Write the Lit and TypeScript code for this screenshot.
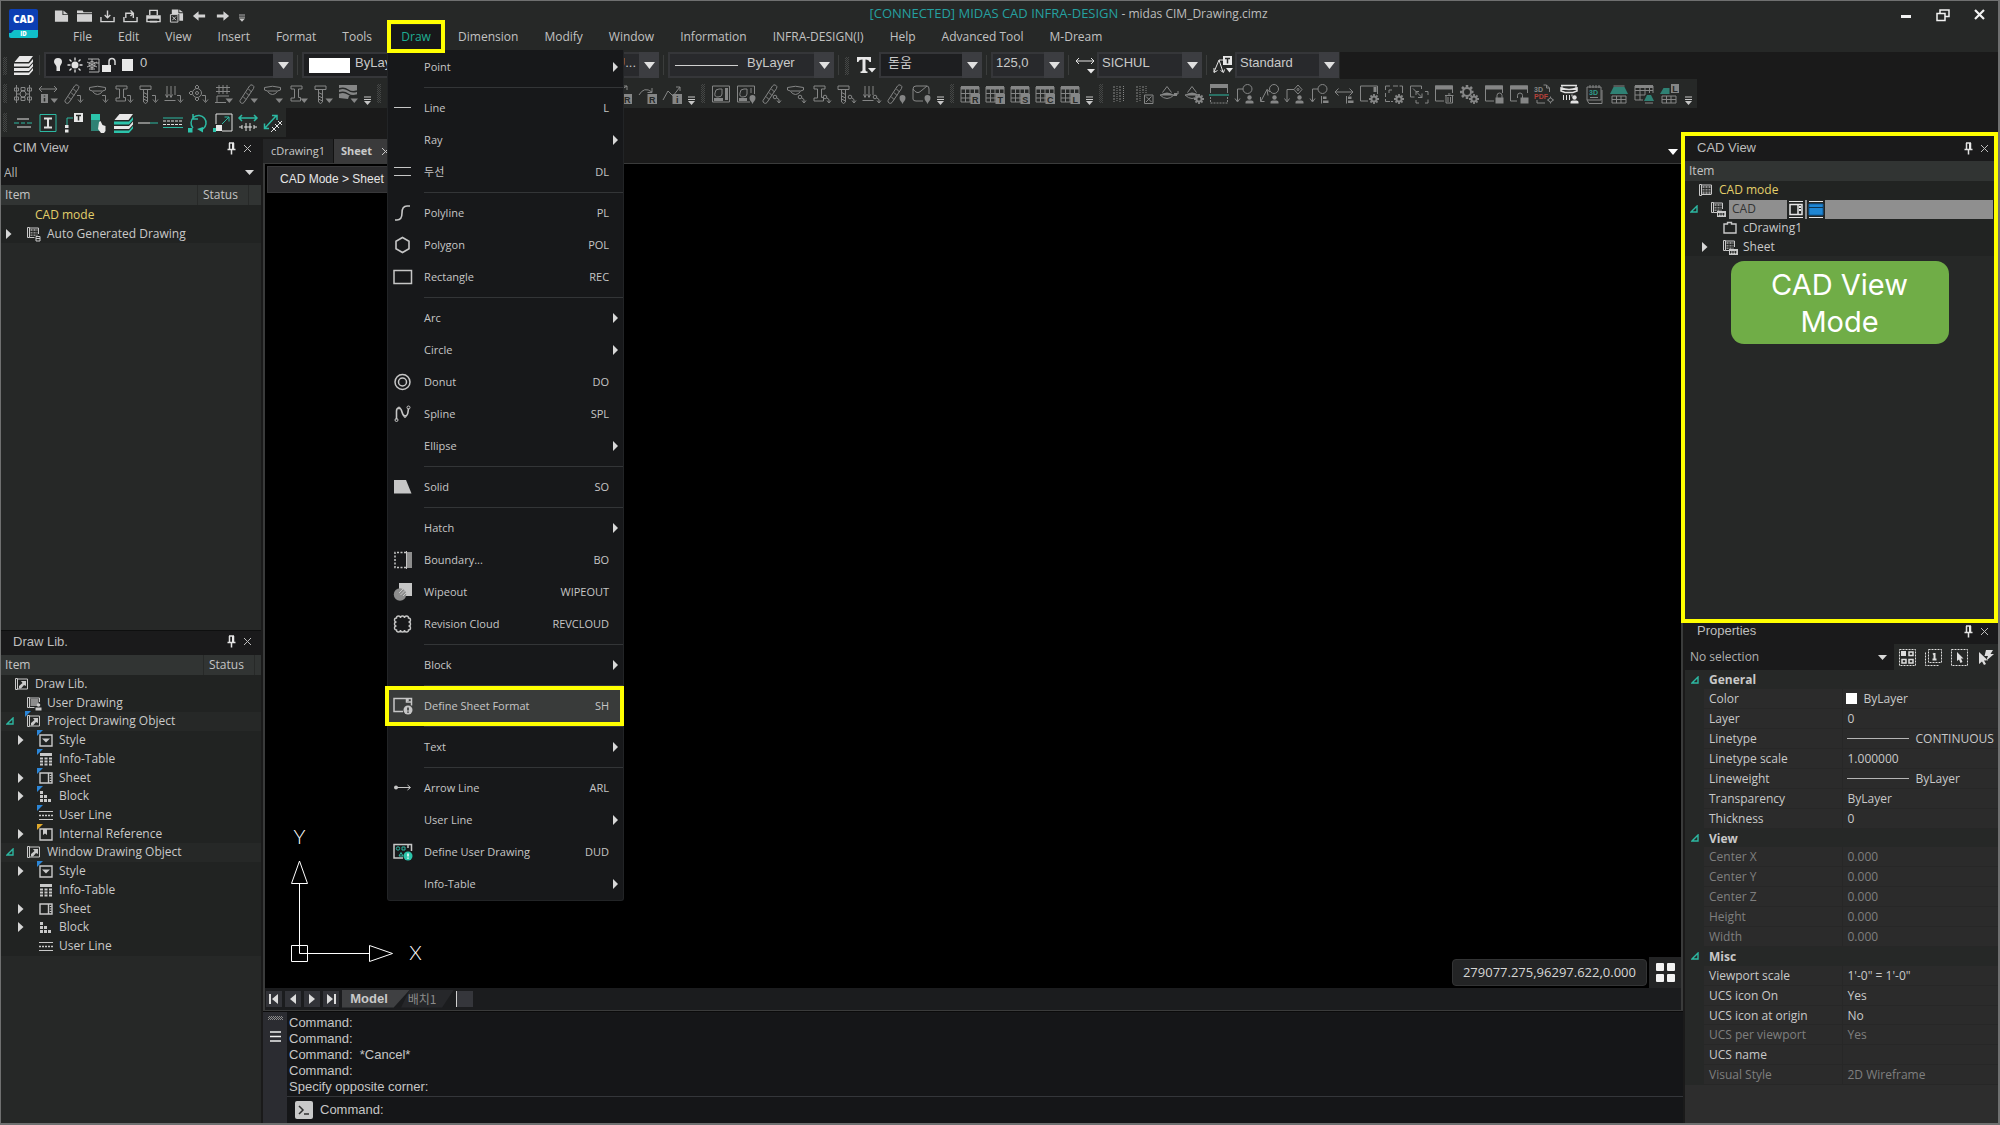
import { LitElement, html, svg, css, nothing, TemplateResult } from "lit";
import { customElement, property } from "lit/decorators.js";
import { classMap } from "lit/directives/class-map.js";

/* ---------- icon fragments, all on a 20 x 20 grid ---------- */

const arrowDn = svg`<path d="M14 11.500h3.500v6M15 15.500l2.500 3 2.500-3"/>`;
const triDn = svg`<path class="f" d="M12.500 14.500h7.500l-3.750 4.500z"/>`;
const nodeDn = svg`<circle cx="14" cy="13" r="1.800"/><path d="M16 14l2 1.500v3M16 16.500l2 2.500 2-2.500"/>`;
const pin = svg`<path class="f" d="M16.500 20c-1-2.500-3-3.500-3-6a3 3 0 0 1 6 0c0 2.500-2 3.500-3 6z"/>`;
const person = svg`<circle class="f" cx="15.500" cy="13.500" r="2.200"/><path class="f" d="M11.500 19.500v-1.500q0-1.500 2-1.500h4q2 0 2 1.500v1.500z"/>`;
const list = svg`<path d="M12.500 12v7.500"/><path class="f" d="M14 12.500h3.500v2.500h-3.500zM14 16.500h5.500v2.500h-5.500z"/>`;
const gear = svg`<circle cx="15" cy="15" r="2.600" stroke-width="2"/><path stroke-width="1.800" d="M15 10v2M15 18v2M10 15h2M18 15h2M11.500 11.500l1.400 1.400M17.100 17.100l1.400 1.400M18.500 11.500l-1.400 1.400M12.900 17.100l-1.400 1.400"/>`;
const letter = (t: string) =>
  svg`<rect class="f" x="10.500" y="10" width="9.500" height="10"/><text class="badge" x="15.250" y="18.500">${t}</text>`;
const bar = svg`<path d="M2 16.500L11.500 2a2.300 2.300 0 0 1 4 2.500L6 18.500a2.300 2.300 0 0 1-4-2zM5 12.500l3 3M8 8.500l3 3M10.500 5l3 3"/>`;
const bowl = svg`<path d="M1.500 3.500q8-2.500 16 0v2.500l-3 1h-10l-3-1zM4.500 7.500q5 6 10 0"/>`;
const beam = svg`<path d="M3 2h11v3h-3.500v8.500h2v3.500H3v-3h3.500V5H3z"/>`;
const tpile = svg`<path d="M2 2h11v3.500H2zM5.500 5.500h4V18l-2 1.500-2-1.500zM5.500 8.500l4 2M5.500 12l4 2M5.500 15l4 2"/>`;
const piles = svg`<path d="M4 2v11M8 2v11M12 2v9M2.500 10.500l1.500 3 1.500-3M6.500 10.500l1.500 3 1.500-3M1.500 16.500h11"/>`;
const table = svg`<path d="M1 3h18v15H1z"/><path class="f" d="M1 2h18v3.500H1z"/><path d="M1 9.500h18M1 14h18M5.500 3v15M10 3v15M14.500 3v15"/>`;
const win = svg`<path d="M1.500 2h17v15h-17z"/><path class="f" d="M1 1.500h18v4H1z"/>`;
const diamond = svg`<path class="f" d="M1 11q7-5 14 0z"/><path d="M3.500 8.500L8 2.500l4.500 6M1 11q7 7 14 0z"/>`;
const roof = svg`<path class="t" d="M4.500 3h11l3.500 7H1z"/>`;
const office = svg`<path d="M3 12h14v7H3zM3 15.500h14M7.500 12v7M12 12v7"/>`;

const ICONS: Record<string, TemplateResult> = {
  rails: svg`<path d="M3.500 1v18M16.500 1v18M7 10h-3.500M13 10h3.500"/><circle cx="10" cy="10" r="3"/><path d="M8 3.500h4v3h-4zM8 13.500h4v3h-4zM1.500 4h4v3h-4zM14.500 4h4v3h-4zM1.500 13h4v3h-4zM14.500 13h4v3h-4z"/>`,
  span: svg`<path d="M1 5h18M4 2L1 5l3 3M16 2l3 3-3 3"/><path class="f" d="M3 10h7v9H3z"/><path class="k" d="M6.500 11.500v1M6.500 14v3.500"/>${triDn}`,
  bar1: svg`${bar}${arrowDn}`,
  bowl1: svg`${bowl}${arrowDn}`,
  beam1: svg`${beam}${arrowDn}`,
  tpile1: svg`${tpile}${arrowDn}`,
  piles1: svg`${piles}${arrowDn}`,
  target1: svg`<circle cx="9" cy="9" r="4.500"/><circle cx="9" cy="9" r="1.500"/><path d="M9 1l2 2-2 2-2-2zM9 13l2 2-2 2-2-2zM1 9l2-2 2 2-2 2z"/>${arrowDn}`,
  hash2: svg`<path d="M6 1v9M10 1v9M14 1v9M3 3.500h14M3 7.500h14M4 12h12M2 18.500h11M4 12v6.500"/>${triDn}`,
  bar2: svg`${bar}${triDn}`,
  bowl2: svg`${bowl}${triDn}`,
  beam2: svg`${beam}${triDn}`,
  tpile2: svg`${tpile}${triDn}`,
  waves2: svg`<path class="f" d="M1 1h18v11h-8l-1 3-9-1z"/><path class="k" d="M1 5q5-2 9 1t9 1M1 9q5-2 9 1t9 1"/>${triDn}`,
  curveR: svg`<path d="M2 10L15 2M11 2h4v4"/>${letter("R")}`,
  arcR: svg`<path d="M2 11q5-9 13-3M15 4v4.500h-4.500"/>${letter("R")}`,
  zigI: svg`<path d="M1 16L6 7l5 5 7-9M14 3h4v4"/>${letter("i")}`,
  sheet1: svg`<path d="M1.500 2h17v16h-17z"/><path class="f" d="M14 4h3v12h-3zM3 14h9v3H3z"/><path d="M4 9q0-4 4-4h3v5q0 3-4 3t-3-4"/>`,
  sheet2: svg`<path d="M14 18H1.500V2h17v8M15 4v5"/><path class="f" d="M3 14h8v3H3z"/><path d="M4 9q0-4 4-4h3v5q0 3-4 3t-3-4"/>${pin}`,
  bar3: svg`${bar}${nodeDn}`,
  bowl3: svg`${bowl}${nodeDn}`,
  beam3: svg`${beam}${nodeDn}`,
  tpile3: svg`${tpile}${nodeDn}`,
  piles3: svg`${piles}${nodeDn}`,
  bar4: svg`${bar}${pin}`,
  map4: svg`<path d="M2 5q0-3 3-3h11q2 0 2 3v5M2 5v10q0 2 3 2h7M2 5q4 6 8 2l6-5"/>${pin}`,
  tblR: svg`${table}${letter("R")}`,
  tblT: svg`${table}${letter("T")}`,
  tblS: svg`${table}${letter("S")}`,
  tblC: svg`${table}${letter("C")}`,
  tblL: svg`${table}${letter("L")}`,
  dots: svg`<path stroke-dasharray="2 1" d="M5 2v16M11 2v16"/><path stroke-dasharray="1 1" d="M8 2v16M14.500 2v16"/>`,
  dotsX: svg`<path stroke-dasharray="2 1" d="M3 2v16M9 2v7"/><path stroke-dasharray="1 1" d="M6 2v16M12 2v7"/><path d="M10.500 11h8.500v8.500h-8.500zM12 12.500l5.500 5.500M17.500 12.500l-5.500 5.500"/>`,
  dia: svg`${diamond}<path d="M15 10h4V7"/><path class="f" d="M15 9h3v3h-3z"/>`,
  diaGear: svg`${diamond}${gear}`,
  winTeal: svg`<path class="f" d="M1 0h18v4H1z"/><path d="M1.500 1v8M18.500 1v8"/><path class="ts" d="M0 11h20"/><path stroke-dasharray="2 1" d="M1.500 13v6h17v-6"/>`,
  leadP: svg`<circle cx="13.500" cy="5" r="4.500"/><path d="M9 5H3.500v12M1 14.500L3.500 18 6 14.500"/>${person}`,
  zigP: svg`<circle cx="15" cy="5" r="4.500"/><path d="M11 8L8 5.500 2 17M1.500 13v4.500h4"/><path d="M8 5.500l1 6"/>${person}`,
  diaP: svg`<path d="M14 1l4 4.500-4 4.500-4-4.500z"/><circle cx="14" cy="5.500" r="1"/><path d="M10 5.500H3v11.500M.500 14.500L3 18l2.500-3.500"/>${person}`,
  leadL: svg`<circle cx="13.500" cy="5" r="4.500"/><path d="M9 5H3.500v12M1 14.500L3.500 18 6 14.500"/>${list}`,
  spanL: svg`<path d="M1 8h18M4.500 4.500L1 8l3.500 3.500M15.500 4.500L19 8l-3.500 3.500"/>${list}`,
  rectG: svg`<path d="M9 17H1.500V2h17v8"/><path class="f" d="M14.500 3h3v5h-3z"/>${gear}`,
  dashG: svg`<path d="M1.500 6V2H6M9 2h5M18.500 9V2h-3M1.500 9v4M1.500 15v2.500H6M7 17.500h2M5 6h3M5 6v3"/>${gear}`,
  inset: svg`<path d="M1.500 13V2h11v3M1.500 13h4M10 7.500H7V11M16 7.500h3V11M19 15.500V19h-3M10 19H7v-3"/><path d="M4 4.500l9 9M13 9.500v4H9"/>`,
  trash: svg`${win}<path class="bg" d="M10 9h10v11H10z"/><path d="M11 11.500h8.500M12 11.500v7.500h6.500v-7.500M14 13v5M16.500 13v5M14 10h2.500"/>`,
  gears: svg`<circle cx="8" cy="8" r="4" stroke-width="2"/><path stroke-width="2.500" d="M8 1v2.500M8 12.500V15M1 8h2.500M3 3l2 2M13 3l-2 2M3 13l2-2M12.500 8h2"/>${gear}`,
  lock: svg`${win}<path class="bg" d="M10 9h10v11H10z"/><path class="f" d="M11.500 13.500h8V19.500h-8z"/><path d="M13 14v-2.500a2.500 2.500 0 0 1 5 0V14"/>`,
  unlock: svg`${win}<path class="bg" d="M8 9h12v11H8z"/><path class="f" d="M11.500 13.500h8V19.500h-8z"/><path d="M8.500 14v-2.500a2.500 2.500 0 0 1 5 0V14"/>`,
  pdf: svg`<text class="s" x="0" y="7.500">3D</text><text class="s r" x="0" y="14.500">PDF</text><path d="M9.500 1h3l3 3v4M12.500 1v3h3M3 16v3h8"/><circle cx="16.500" cy="16" r="2"/><path d="M16.500 12.500v7M13 16h7" stroke-dasharray="1.500 4"/>`,
  pier: svg`<g class="w"><path stroke-width="1.500" d="M2 1.500h16M2 4q8 3 16 0v3l-4 1.500H6L2 7z"/><path d="M3 1v3M17 1v3M4.500 11v5M7.500 11v5M10.500 11v5M13 10.500v2"/>${person}</g>`,
  doc3d: svg`<path d="M3 3h14v13H3zM3 16l2 3.500h13V6M6 1v3M9 1v3M12 1v3M15 1v3M6 13.500h8"/><text class="s tt" x="5" y="11">3D</text>`,
  roof1: svg`${roof}<path d="M4.500 2h11"/>${office}`,
  roof2: svg`<path d="M1 2h18M1 2v14h8M1 6.500h18M1 11h10M6 2v14M11 2v9M15.500 2v7M19 2v7"/><path class="f" d="M1 1h18v3H1z"/><path class="t" d="M13 11h4l3 6h-10z"/><path d="M11 19h8"/>`,
  roof3: svg`<path class="t" d="M4.500 4h6v6H1z"/><path class="f" d="M12 0h8v9h-8z"/><text class="badge" x="16" y="7.500">L</text>${office}`,

  layers: svg`<path class="fw" d="M6.500 1H20l-4.500 6H1.500zM1 8.500h15L20 4v3l-4 4.500H1zM1 13h15l4-4.500v3L16 16H1zM1 17.500h15l4-4.500v2.500L16 20H1z"/>`,
  textStyle: svg`<path class="fw" d="M1 2h14v5h-1.500q-.500-2.500-4-2.500V15q0 1.500 2 1.500V18h-7v-1.500q2 0 2-1.500V4.500q-4 0-4 2.500H1z"/><path class="fw" d="M12 13h8l-4 4.500z"/>`,
  dimStyle: svg`<g class="w"><path d="M1 6h18M4 3L1 6l3 3M16 3l3 3-3 3"/></g><path class="fw" d="M12 14h8l-4 4.500z"/>`,
  leadStyle: svg`<g class="w"><path d="M1 17L6 5h4M1 13v4.500l3.500-2M6 5l4 12M7.500 15.500l3 2 1-3"/></g><path class="fw" d="M10 1h9v9h-9zM13 13h7l-3.500 4.500z"/><path class="k" d="M12 3.500h5M14.500 3.500V8.500"/>`,

  tWidth: svg`<g class="w"><path d="M4 6h12M4 14h14"/></g><path class="ts" d="M1 10h5M8 10h4M14 10h5"/>`,
  tBeam: svg`<path class="ts" d="M2 1.500h16v17H2z"/><g class="w"><path stroke-width="2" d="M6 5.500h8M6 14.500h8M10 5.500v9"/></g>`,
  tText: svg`<path class="ts" d="M4 12V5h6"/><path class="fw" d="M2 12h3.500v3H2zM2 16.500h3.500v3H2zM11 0h9v9h-9z"/><path class="k" d="M13 2.500h5M15.500 2.500V7.500"/>`,
  tFill: svg`<path class="t" d="M3 1h9v17H3z"/><path class="t2" d="M3 1h9v6H3z"/><path class="fw" d="M11 9l1.500-1 2 4 3 1v5l-1.500 2h-3L10 16z"/>`,
  tLayers: svg`<path class="fw" d="M6.500 1H20l-4.500 6H1.500z"/><path class="t2" d="M1 8.500h15L20 4v3l-4 4.500H1z"/><path class="fw" d="M1 13h15l4-4.500v3L16 16H1z"/><path class="t2" d="M1 17.500h15l4-4.500v2.500L16 20H1z"/>`,
  tLine: svg`<g class="w"><path d="M0 10h12"/></g><path class="ts" d="M12 10h8"/>`,
  tDash: svg`<path class="ts" d="M0 5h20M0 14.500h20"/><g class="w"><path stroke-dasharray="3 1" d="M0 8h20M0 11.500h20"/></g>`,
  tRot: svg`<path class="ts" stroke-width="1.500" d="M5 15A7.500 7.500 0 1 1 15 16M5 1v5h5"/><path class="t2" d="M0 15h4.500v4.500H0zM9 16l6-2v5.500z"/>`,
  tScale: svg`<g class="w"><path d="M3 11V1h16v17H9"/></g><path class="fw" d="M3 12h6v6H3z"/><path class="ts" d="M9 11l7-7M11.500 4H16v4.500"/><path class="t2" d="M0 15h3v4H0z"/>`,
  tDim: svg`<path class="ts" stroke-width="1.500" d="M1 5h18M4 2L1 5l3 3M16 2l3 3-3 3"/><g class="w"><path d="M1 14h3M16 14h3M4 12v4M8 10v8M12 10v8M16 12v4M6 14h8"/></g>`,
  tAlign: svg`<path class="ts" stroke-width="1.500" d="M2 15L13 3M9 2.500h5V7M1.500 10.500V15.500H6"/><g class="w"><path d="M8 19l11-11M9 14l4 4M12 11l4 4M15 8l4 4"/></g>`,
};

const MENU_ICONS: Record<string, TemplateResult> = {
  line: svg`<path d="M1 9.500h17"/>`,
  dline: svg`<path d="M1 5.500h17M1 13.500h17"/>`,
  poly: svg`<path stroke-width="1.600" d="M2 17h2q5 0 5-7t5-7h3"/>`,
  hexa: svg`<path stroke-width="1.600" d="M9.500 2.500l6.500 3.750v7.500L9.500 17.500 3 13.750v-7.500z"/>`,
  rect: svg`<path stroke-width="1.500" d="M1 3.500h17.500v13H1z"/>`,
  donut: svg`<circle stroke-width="1.500" cx="9.500" cy="10" r="7.500"/><circle stroke-width="1.500" cx="9.500" cy="10" r="4"/>`,
  spline: svg`<path stroke-width="1.600" d="M3.500 15.500V7q0-3 2.500-3 2 0 3 4t3 4q2.500 0 3-4l.500-3.500"/><circle cx="3.500" cy="16" r="1.500"/><circle cx="15.500" cy="3.500" r="1.500"/><circle cx="6" cy="4" r="1"/><circle cx="12" cy="12.500" r="1"/>`,
  solid: svg`<path class="f" d="M1 3h12l5.500 13.500H1z"/>`,
  bound: svg`<path stroke-width="1.500" stroke-dasharray="2 1.500" d="M13 2.500H2v15h11"/><path class="fg" d="M14 2h5v16h-5z"/><path d="M13.500 1v18"/>`,
  wipe: svg`<path class="f" d="M6 1h13v13H6z"/><circle class="fg" cx="7" cy="12.500" r="6.200"/><path d="M6 11l4-4M7.500 13l5-5M10 14l3-3"/>`,
  cloud: svg`<path stroke-width="1.400" d="M3.500 4a2 2 0 0 1 4 0 2 2 0 0 1 4 0 2 2 0 0 1 4 0 2 2 0 0 1 0 4 2 2 0 0 1 0 4 2 2 0 0 1 0 4 2 2 0 0 1-4 0 2 2 0 0 1-4 0 2 2 0 0 1-4 0 2 2 0 0 1 0-4 2 2 0 0 1 0-4 2 2 0 0 1 0-4z"/>`,
  sheetfmt: svg`<path stroke-width="1.500" d="M10 15.500H1v-13h17.500v7M13.500 2.500V6h5M15 2v3"/><circle class="f" cx="15" cy="14" r="4.500"/><path class="k2" d="M15 11.500v3M15 15.500v1.200"/>`,
  arrow: svg`<circle class="f" cx="3" cy="9.500" r="2"/><path d="M4 9.500h13M14.500 7l3 2.500-3 2.500"/>`,
  userdrw: svg`<path stroke-width="1.500" d="M10 16H1V2.500h17.500V9M15 2v4"/><circle class="ts" cx="5" cy="6.500" r="1.700"/><path class="ts" d="M9 5h3v3H9zM6 14l2-3.500 2 3.500z"/><circle class="t2" cx="15" cy="14" r="4.500"/><path class="k3" d="M15 11.500v3M15 15.500v1.200"/>`,
};

const TREE_ICONS: Record<string, TemplateResult> = {
  scroll: svg`<path d="M1.500 2.500h2v11h-2zM3.500 3h10v9M3.500 12.500h10"/><path class="fg" d="M4.500 4h8v8h-8z"/><path class="kk" d="M4 6.500h9M4 9h9M7 4v8M10 4v8"/>`,
  scrollCad: svg`<path d="M1.500 1.500h2v10h-2zM3.500 2h9v6M3.500 11.500h4"/><path class="fg" d="M4.500 3h7v7h-7z"/><path class="kk" d="M4 5.500h8M4 8h8M7 3v7M10 3v7"/><path class="f" d="M7 10h9v6H7z"/><path class="kk" d="M8.500 12v2.500M11 12v2.500M13.500 12v2.500M8.500 13h6"/>`,
  scrollA: svg`<path d="M1.500 1.500h2v10h-2zM3.500 2h9v6M3.500 11.500h5"/><path class="fg" d="M4.500 3h7v7h-7z"/><path class="kk" d="M4 5.500h8M4 8h8M7 3v7M10 3v7"/><path d="M10 10.500h4v4.500h-4zM10 12.500h4"/>`,
  lib: svg`<path d="M1.500 2.500h2v11h-2zM3.500 3h10v10h-10z"/><path class="f" d="M7 5h5v5l-2-1-3 3.500H5V10l3.500-3z"/>`,
  user: svg`<path d="M1.500 2.500h2v10h-2zM3.500 3h10v4M3.500 12.500h5"/><path class="fg" d="M4.500 4h8v7h-8z"/><circle class="f" cx="12.500" cy="10" r="1.800"/><path class="f" d="M9.500 15.500v-3h6v3z"/>`,
  style: svg`<path stroke-width="1.400" d="M2 3h12v11H2z"/><path class="f" d="M4 6.500h8l-4 4z"/>`,
  info: svg`<path class="f" d="M2 2h12v3H2zM2 6.500h3v2H2zM6.500 6.500h3v2h-3zM11 6.500h3v2h-3zM2 9.500h3v2H2zM6.500 9.500h3v2h-3zM11 9.500h3v2h-3zM2 12.500h3v2H2zM6.500 12.500h3v2h-3zM11 12.500h3v2h-3z"/>`,
  sheet: svg`<path stroke-width="1.400" d="M2 3h12v10H2zM10.500 3v10M12.500 5v1M12.500 7.500v1M12.500 10v1"/>`,
  block: svg`<path class="f" d="M2 3h3v3H2zM2 7h3v3H2zM2 11h3v3H2zM6 7h3v3H6zM6 11h3v3H6zM10 11h3v3h-3z"/>`,
  uline: svg`<path d="M1 4.500h14M1 12.500h14"/><path stroke-width="1.500" stroke-dasharray="2 1" d="M1 8.500h14"/>`,
  ref: svg`<path stroke-width="1.400" d="M2 3h12v11H2z"/><path class="f" d="M5 3h4v6L7 7.500 5 9z"/>`,
  tab: svg`<path stroke-width="1.400" d="M2 4h3.500v-1.500h4V4H14v9H2z"/>`,
};

const icon = (set: Record<string, TemplateResult>, name: string, size: number, box = 20) =>
  html`<svg class="ic" width=${size} height=${size} viewBox="0 0 ${box} ${box}" aria-hidden="true">${set[name]}</svg>`;

const pinIcon = svg`<path class="w" d="M4 1h5M4.500 1v6M8.500 1v6M2.500 7.500h8M6.500 8v4.500" stroke-width="1.500"/><path class="fw" d="M7 1h2v6H7z"/>`;

/* Shared drawing rules for inline icons and plain controls */
const base = css`
  * { box-sizing: border-box; }
  button, select, input {
    font: inherit; color: inherit; background: none; border: 0; padding: 0; margin: 0; border-radius: 0;
  }
  select { appearance: none; outline: 0; }
  .ic { display: block; flex: none; fill: none; stroke: currentColor; stroke-width: 1; overflow: visible; }
  .ic .f { fill: currentColor; stroke: none; }
  .ic .fg { fill: #8d8d8d; stroke: none; }
  .ic .w { color: #e2e2e2; stroke: #e2e2e2; }
  .ic .fw { fill: #e8e8e8; stroke: none; }
  .ic .k, .ic .k2 { stroke: #262827; stroke-width: 1.500; }
  .ic .kk { stroke: #2a2c2b; stroke-width: 1; }
  .ic .k3 { stroke: #ffffff; stroke-width: 1.500; }
  .ic .t { fill: #2f8174; stroke: none; }
  .ic .t2 { fill: #2cc4ab; stroke: none; }
  .ic .ts { stroke: #2cb8a2; }
  .ic .bg { fill: #262827; stroke: none; }
  .ic text { stroke: none; font-family: "Liberation Sans", sans-serif; font-weight: 700; }
  .ic .badge { fill: #262827; font-size: 9px; text-anchor: middle; }
  .ic .s { fill: currentColor; font-size: 7px; }
  .ic .r { fill: #b5413a; }
  .ic .tt { fill: #2f9c8b; }
`;

/* ---------- dock panel ---------- */

@customElement("dock-panel")
export class DockPanel extends LitElement {
  @property() heading = "";
  static styles = [base, css`
    :host { display: flex; flex-direction: column; min-height: 0; background: #262827; overflow: hidden; }
    .title {
      display: flex; align-items: center; height: 24px; padding: 0 6px 2px 12px; flex: none;
      background: #1a1a1b; color: #bdbdbd; font-family: "Liberation Sans", "Noto Sans CJK KR", sans-serif;
    }
    h2 { margin: 0; font-size: 13px; font-weight: 400; flex: 1; }
    button { display: grid; place-items: center; width: 16px; height: 16px; }
  `];
  render() {
    return html`
      <div class="title">
        <h2>${this.heading}</h2>
        <button aria-label="Pin"><svg class="ic" width="13" height="13" viewBox="0 0 13 13">${pinIcon}</svg></button>
        <button aria-label="Close"><svg class="ic" width="9" height="9" viewBox="0 0 9 9"><path d="M1 1l7 7M8 1l-7 7"/></svg></button>
      </div>
      <slot></slot>`;
  }
}

/* ---------- tree ---------- */

interface Node {
  label: string; level: number; icon?: string; toggle?: "open" | "closed";
  mark?: "blue" | "amber"; root?: boolean; accent?: boolean; selected?: boolean;
}

@customElement("item-tree")
export class ItemTree extends LitElement {
  @property({ attribute: false }) nodes: Node[] = [];
  @property({ type: Boolean }) status = false;
  @property({ type: Boolean }) wide = false;
  static styles = [base, css`
    :host { display: block; font-size: 12px; color: #c9c9c9; }
    .head { display: flex; align-items: center; height: 20px; background: #313433; padding-left: 4px; color: #c4c4c4; }
    .head span:first-child { flex: 1; }
    .st { width: 52px; height: 20px; line-height: 20px; padding-left: 5px; border: solid #272928; border-width: 0 1px; margin-right: 12px; }
    .wide .st { margin-right: 6px; }
    ul { list-style: none; margin: 0; padding: 0; display: grid; grid-auto-rows: 1fr; background: #212322; }
    .n2 { height: 38px; } .n4 { height: 75px; } .n15 { height: 281px; }
    li { display: flex; align-items: center; min-height: 0; white-space: nowrap; }
    li.root { background: #262827; }
    .l0 { padding-left: 13px; } .l1 { padding-left: 5px; } .l2 { padding-left: 17px; }
    .tg { width: 8px; margin-right: 12px; flex: none; display: grid; place-items: center start; }
    .pic { width: 16px; margin-right: 5px; position: relative; flex: none; }
    .mark::before { content: ""; position: absolute; left: -1px; top: -2px; border: solid transparent; border-width: 0 6px 6px 0; border-left: 0; border-top: 6px solid #2b86d8; border-bottom: 0; }
    .amber::before { border-top-color: #e0a92c; }
    .accent { color: #e3cf6a; }
    .sel { display: flex; align-items: center; flex: 1; height: 19px; margin: 0 5px 0 -2px; background: #8f8f8f; color: #333333; }
    .sel b { font-weight: 400; width: 58px; padding-left: 3px; }
    .chip { display: grid; place-items: center; width: 18px; height: 19px; background: #232524; color: #e6e6e6; margin-right: 2px; }
  `];
  private row(n: Node) {
    const cls = { ["l" + n.level]: true, root: !!n.root };
    return html`<li class=${classMap(cls)} role="treeitem">
      ${n.level > 0 ? html`<span class="tg">${n.toggle === "closed"
        ? html`<svg width="6" height="10" viewBox="0 0 6 10"><path d="M0 0l5.500 5L0 10z" fill="#d6d6d6"/></svg>`
        : n.toggle === "open"
        ? html`<svg width="8" height="8" viewBox="0 0 8 8"><path d="M7 1v6H1z" fill="none" stroke="#2cb8a2" stroke-width="1.400"/></svg>`
        : nothing}</span>` : nothing}
      <span class=${classMap({ pic: true, mark: !!n.mark, amber: n.mark === "amber" })}>${n.icon ? icon(TREE_ICONS, n.icon, 16, 16) : nothing}</span>
      ${n.selected
        ? html`<span class="sel"><b>${n.label}</b>
            <span class="chip"><svg class="ic" width="14" height="17" viewBox="0 0 14 17"><path d="M0 .500h14M0 16.500h14"/><path d="M1 3.500h12v10H1zM9 4v9" stroke-width="1.500"/><path class="f" d="M10 5h2v2h-2zM10 8h2v2h-2z"/></svg></span>
            <span class="chip"><svg class="ic" width="16" height="17" viewBox="0 0 16 17"><path d="M1 .500h14M1 16.500h14"/><path d="M1 3h14v11H1z" fill="#1f86d4" stroke="#0f5c9c"/><path d="M1 6.500h14" stroke="#10354f"/></svg></span>
          </span>`
        : html`<span class=${n.accent ? "accent" : ""}>${n.label}</span>`}
    </li>`;
  }
  render() {
    return html`
      <div class="head ${this.wide ? "wide" : ""}"><span>Item</span>${this.status ? html`<span class="st">Status</span>` : nothing}</div>
      <ul class="n${this.nodes.length}" role="tree">${this.nodes.map((n) => this.row(n))}</ul>`;
  }
}

/* ---------- draw menu ---------- */

type Entry = null | { label: string; icon?: string; key?: string; marked?: boolean };
const e = (label: string, key?: string, icon?: string, marked = false): Entry => ({ label, key, icon, marked });
const DRAW: Entry[] = [
  e("Point"), null,
  e("Line", "L", "line"), e("Ray"), e("두선", "DL", "dline"), null,
  e("Polyline", "PL", "poly"), e("Polygon", "POL", "hexa"), e("Rectangle", "REC", "rect"), null,
  e("Arc"), e("Circle"), e("Donut", "DO", "donut"), e("Spline", "SPL", "spline"), e("Ellipse"), null,
  e("Solid", "SO", "solid"), null,
  e("Hatch"), e("Boundary...", "BO", "bound"), e("Wipeout", "WIPEOUT", "wipe"), e("Revision Cloud", "REVCLOUD", "cloud"), null,
  e("Block"), null,
  e("Define Sheet Format", "SH", "sheetfmt", true), null,
  e("Text"), null,
  e("Arrow Line", "ARL", "arrow"), e("User Line"), e("Define User Drawing", "DUD", "userdrw"), e("Info-Table"),
];

@customElement("draw-menu")
export class DrawMenu extends LitElement {
  static styles = [base, css`
    :host { display: block; width: 237px; padding: 1px 0 0; background: #17181a; border: 1px solid #222426; border-top: 0; font-size: 11px; color: #c6c6c6; border-radius: 0 0 3px 3px; }
    button { position: relative; display: flex; align-items: center; width: 100%; height: 32px; padding: 0 14px 0 4px; text-align: left; }
    .pic { width: 32px; display: flex; padding-left: 1px; }
    .name { flex: 1; }
    .sub { margin-right: -9px; width: 5px; height: 10px; }
    hr { height: 1px; border: 0; margin: 4px 0 4px 36px; background: #333537; }
    .marked { background: #393b3a; }
    .marked::after { content: ""; position: absolute; inset: -4px -1px -4px -3px; border: 4px solid #ffff00; z-index: 1; }
  `];
  render() {
    return DRAW.map((m) => m === null ? html`<hr>` : html`
      <button role="menuitem" class=${m.marked ? "marked" : ""}>
        <span class="pic">${m.icon ? icon(MENU_ICONS, m.icon, 20) : nothing}</span>
        <span class="name">${m.label}</span>
        ${m.key ? html`<span>${m.key}</span>`
          : html`<svg class="sub" viewBox="0 0 5 10"><path d="M0 0l5 5-5 5z" fill="#d8d8d8"/></svg>`}
      </button>`);
  }
}

/* ---------- property grid ---------- */

type Prop = { name: string; value?: string; head?: boolean; dim?: boolean; swatch?: boolean; line?: boolean };
const h = (name: string): Prop => ({ name, head: true });
const PROPS: Prop[] = [
  h("General"),
  { name: "Color", value: "ByLayer", swatch: true }, { name: "Layer", value: "0" },
  { name: "Linetype", value: "CONTINUOUS", line: true }, { name: "Linetype scale", value: "1.000000" },
  { name: "Lineweight", value: "ByLayer", line: true }, { name: "Transparency", value: "ByLayer" },
  { name: "Thickness", value: "0" },
  h("View"),
  ...["Center X", "Center Y", "Center Z", "Height", "Width"].map((name) => ({ name, value: "0.000", dim: true })),
  h("Misc"),
  { name: "Viewport scale", value: "1'-0\" = 1'-0\"" }, { name: "UCS icon On", value: "Yes" },
  { name: "UCS icon at origin", value: "No" }, { name: "UCS per viewport", value: "Yes", dim: true },
  { name: "UCS name", value: "" }, { name: "Visual Style", value: "2D Wireframe", dim: true },
];

@customElement("property-grid")
export class PropertyGrid extends LitElement {
  static styles = [base, css`
    :host { display: flex; flex-direction: column; flex: 1; min-height: 0; font-size: 12px; color: #c9c9c9; background: #2d2d2d; }
    .pick { display: flex; align-items: center; height: 26px; background: #262827; flex: none; }
    .box { display: flex; align-items: center; flex: 1; height: 26px; background: #1a1a1b; padding: 0 7px 0 5px; }
    select { flex: 1; min-width: 0; color: #b0b0b0; }
    .pick button { width: 26px; height: 26px; display: grid; place-items: center; color: #dedede; }
    table { width: 100%; height: 415px; border-collapse: collapse; table-layout: fixed; }
    td, th { padding: 0; text-align: left; font-weight: 400; line-height: 15px; white-space: nowrap; overflow: hidden; }
    .g { width: 19px; background: #262827; }
    .n { width: 138px; }
    th.nm, td.v { padding-left: 5px; background: #2b2b2b; border-bottom: 1px solid #272727; }
    td.v { border-left: 1px solid #272727; padding-left: 5px; }
    th.h { background: #262827; font-weight: 700; padding-left: 5px; }
    .dim { color: #7f7f7f; }
    .dim td, .dim th { color: #7f7f7f; }
    .tg { display: block; margin-left: 6px; }
    .val { display: flex; align-items: center; }
    .sw { width: 11px; height: 11px; background: #ffffff; margin: 0 7px 0 -2px; }
    .ln { width: 62px; height: 1px; background: #b5b5b5; margin: 0 7px 0 -1px; flex: none; }
  `];
  render() {
    return html`
      <div class="pick">
        <label class="box"><select aria-label="Selection"><option>No selection</option></select>
          <svg width="9" height="5" viewBox="0 0 9 5"><path d="M0 0h9L4.500 5z" fill="#d8d8d8"/></svg></label>
        <button aria-label="Filter"><svg class="ic" width="17" height="17" viewBox="0 0 17 17"><path stroke-dasharray="2 1" d="M.500.500h16v16H.500z"/><path class="f" d="M2 2h5v5H2z"/><path stroke-width="1.500" d="M10 3h4v3.500h-4zM3 10.500h4V14H3zM10 10.500h4V14h-4z"/></svg></button>
        <button aria-label="Single"><svg class="ic" width="17" height="17" viewBox="0 0 17 17"><path stroke-dasharray="2 1" d="M3.500.500h13v13h-13zM.500 3.500v13h13"/><path stroke-width="2" d="M9.500 4v7M8 5.500l1.500-1M7.500 10.500h4"/></svg></button>
        <button aria-label="Select"><svg class="ic" width="17" height="17" viewBox="0 0 17 17"><path stroke-dasharray="2 1" d="M.500.500h16v16H.500z"/><path class="f" d="M6 3l6.500 6.500H10l1.500 3.500-2 1L8 10.500 6 12z"/></svg></button>
        <button aria-label="Quick select"><svg class="ic" width="17" height="17" viewBox="0 0 17 17"><path class="f" d="M2 3v12l3-2.500L7 16l2-1-2-3.500h4zM9 1h7l-2.500 4H17l-8 7 2-5H7.500z"/></svg></button>
      </div>
      <table>
        <colgroup><col class="g"><col class="n"><col></colgroup>
        <tbody>${PROPS.map((p) => p.head
          ? html`<tr><td class="g"><svg class="tg" width="8" height="8" viewBox="0 0 8 8"><path d="M7 1v6H1z" fill="none" stroke="#2cb8a2" stroke-width="1.400"/></svg></td><th class="h" colspan="2" scope="rowgroup">${p.name}</th></tr>`
          : html`<tr class=${p.dim ? "dim" : ""}><td class="g"></td><th class="nm" scope="row">${p.name}</th>
              <td class="v"><div class="val">${p.swatch ? html`<span class="sw"></span>` : nothing}${p.line ? html`<span class="ln"></span>` : nothing}${p.value}</div></td></tr>`)}
        </tbody>
      </table>`;
  }
}

/* ---------- application shell ---------- */

const MENUS = ["File", "Edit", "View", "Insert", "Format", "Tools", "Draw", "Dimension", "Modify", "Window",
  "Information", "INFRA-DESIGN(I)", "Help", "Advanced Tool", "M-Dream"];

const BAR2 = [
  ["rails", "span", "bar1", "bowl1", "beam1", "tpile1", "piles1", "target1", "hash2", "bar2", "bowl2", "beam2", "tpile2", "waves2"],
  ["arcR", "curveR", "zigI", "arcR", "curveR", "zigI", "arcR", "curveR", "zigI", "curveR", "arcR", "zigI"],
  ["sheet1", "sheet2", "bar3", "bowl3", "beam3", "tpile3", "piles3", "bar4", "map4"],
  ["tblR", "tblT", "tblS", "tblC", "tblL"],
  ["dots", "dotsX", "dia", "diaGear", "winTeal", "leadP", "zigP", "diaP", "leadL", "spanL", "rectG", "dashG", "inset",
    "trash", "gears", "lock", "unlock", "pdf", "pier", "doc3d", "roof1", "roof2", "roof3"],
];
const BAR3 = ["tWidth", "tBeam", "tText", "tFill", "tLayers", "tLine", "tDash", "tRot", "tScale", "tDim", "tAlign"];

const QUICK: [string, TemplateResult][] = [
  ["New", svg`<path class="f" d="M1 1h8v5h6v7H1z"/><path class="f" d="M10 1l5 4h-5z"/>`],
  ["Open", svg`<path class="f" d="M0 1h6l1 2h9v10H0z"/><path d="M0 4.500h16" stroke="#262827"/>`],
  ["Save", svg`<path stroke-width="1.500" d="M1 8v5h14V8M8 1v8M5 6l3 3 3-3"/>`],
  ["Save as", svg`<path stroke-width="1.500" d="M1 8v5h14V8M3 9V4h8M8 1l3 3-3 3M11 4v5"/>`],
  ["Print", svg`<path stroke-width="1.500" d="M4 6V1h8v5M1 7h14v6H1z"/><path class="f" d="M1 7h14v3H1zM4 12h8v2H4z"/>`],
  ["Export", svg`<path class="f" d="M3 0h7v4h5v8h-4V5H3z"/><path d="M1.500 5.500h8v8h-8zM3.500 7.500l4 4M7.500 7.500l-4 4"/><path class="f" d="M11 0l4 3h-4z"/>`],
  ["Undo", svg`<path class="f" d="M1 7l6-5v3.500h7v3H7V12z"/>`],
  ["Redo", svg`<path class="f" d="M15 7L9 2v3.500H2v3h7V12z"/>`],
];

const TREE_CIM: Node[] = [
  { label: "CAD mode", level: 0, accent: true },
  { label: "Auto Generated Drawing", level: 1, icon: "scrollA", toggle: "closed" },
];
const TREE_LIB: Node[] = [
  { label: "Draw Lib.", level: 0, icon: "lib" },
  { label: "User Drawing", level: 1, icon: "user" },
  { label: "Project Drawing Object", level: 1, icon: "lib", toggle: "open", mark: "blue", root: true },
  { label: "Style", level: 2, icon: "style", toggle: "closed", mark: "blue" },
  { label: "Info-Table", level: 2, icon: "info", mark: "blue" },
  { label: "Sheet", level: 2, icon: "sheet", toggle: "closed", mark: "blue" },
  { label: "Block", level: 2, icon: "block", toggle: "closed", mark: "blue" },
  { label: "User Line", level: 2, icon: "uline", mark: "blue" },
  { label: "Internal Reference", level: 2, icon: "ref", toggle: "closed", mark: "amber" },
  { label: "Window Drawing Object", level: 1, icon: "lib", toggle: "open", root: true },
  { label: "Style", level: 2, icon: "style", toggle: "closed", mark: "blue" },
  { label: "Info-Table", level: 2, icon: "info" },
  { label: "Sheet", level: 2, icon: "sheet", toggle: "closed" },
  { label: "Block", level: 2, icon: "block", toggle: "closed" },
  { label: "User Line", level: 2, icon: "uline" },
];
const TREE_CAD: Node[] = [
  { label: "CAD mode", level: 0, icon: "scroll", accent: true },
  { label: "CAD", level: 1, icon: "scrollCad", toggle: "open", selected: true },
  { label: "cDrawing1", level: 2, icon: "tab" },
  { label: "Sheet", level: 2, icon: "scrollCad", toggle: "closed" },
];

@customElement("app-root")
export class AppRoot extends LitElement {
  static styles = [base, css`
    :host {
      display: flex; flex-direction: column; box-sizing: border-box; min-height: 100vh; background: #1a1a1a;
      border: solid #6f7070; border-width: 1px 2px 2px 1px; color: #c9c9c9;
      font: 12px/16px "Open Sans", "Noto Sans CJK KR", sans-serif;
    }
    * { white-space: nowrap; }
    .top { display: flex; background: #262827; }
    .logo { width: 29px; height: 29px; margin: 8px 8px 0; flex: none; }
    .logo text { font-family: "Open Sans", sans-serif; font-weight: 800; fill: #ffffff; text-anchor: middle; }
    .rows { flex: 1; }
    .titlebar { display: flex; align-items: center; height: 24px; }
    .quick { display: flex; width: 204px; padding: 5px 0 0 4px; color: #d2d2d2; }
    .quick button { width: 23px; height: 19px; display: grid; place-items: center; }
    .quick .more { width: 16px; padding-top: 8px; }
    h1 { flex: 1; margin: 0; font-size: 12px; font-weight: 400; text-align: center; color: #bdbdbd; }
    h1 span { color: #25a0a0; font-size: 13px; }
    .wbtn { display: flex; color: #f2f2f2; padding-top: 3px; }
    .wbtn button { width: 37px; height: 21px; display: grid; place-items: center; }
    .menubar { display: flex; height: 27px; padding-left: 14px; color: #c2c2c2; }
    .menubar .m { height: 24px; padding: 0 13px; }
    .dd { position: relative; margin-left: 2px; }
    .dd .m { position: relative; width: 58px; color: #1fae94; background: #17181a; }
    .dd .m::after { content: ""; position: absolute; inset: -5px 0 -4px; border: 4px solid #ffff00; z-index: 6; }
    .dd draw-menu { position: absolute; left: 0; top: 25px; z-index: 5; }

    .bar { display: flex; align-self: flex-start; background: #262827; height: 29px; padding-right: 1px; }
    .bar1 { height: 27px; align-items: flex-start; }
    .grip { width: 4px; margin: 5px 3px 5px 2px; background: repeating-conic-gradient(#454746 0 25%, transparent 0 50%) 0 0 / 2px 2px; }
    .bar1 .grip { height: 18px; }
    .sep { width: 1px; height: 20px; margin: 3px 4px; background: #3b3d3c; }
    .tb { width: 25px; height: 29px; display: grid; place-items: center; color: #858686; }
    .bar1 .tb { height: 26px; }
    .bar1 .w24 { width: 24px; } .bar1 .w27 { width: 27px; }
    .more { width: 15px; height: 29px; display: grid; place-items: end center; padding-bottom: 3px; color: #c6c6c6; }
    .group { display: flex; }
    .combo { display: flex; align-items: center; height: 26px; border: 2px solid #353639; border-right: 0; background: #1d1e20; gap: 3px; padding-left: 5px; color: #c9c9c9; font-family: "Liberation Sans", "Noto Sans CJK KR", sans-serif; }
    .combo select { flex: 1; min-width: 0; font-size: 13px; line-height: 18px; height: 22px; padding: 0 0 4px 2px; }
    .combo .dn { width: 20px; height: 26px; background: #3c3d41; display: grid; place-items: center; flex: none; }
    .c249 { width: 249px; padding-left: 7px; } .c168 { width: 168px; } .c180 { width: 180px; } .c166 { width: 166px; } .c103 { width: 103px; }
    .c73 { width: 73px; padding-left: 1px; } .c105 { width: 105px; padding-left: 1px; } .c104 { width: 104px; padding-left: 1px; }
    .grey { background: #28292c; }
    .white { width: 41px; height: 15px; background: #ffffff; }
    .rule { width: 63px; height: 1px; background: #d0d0d0; }
    .rule + select { padding-left: 6px; }
    .right select { text-align: right; }

    .work { display: flex; flex: 1; min-height: 0; }
    .side { display: flex; flex-direction: column; width: 260px; flex: none; background: #111212; }
    .side dock-panel { flex: 1 1 0; }
    .side dock-panel + dock-panel { border-top: 1px solid #0e0f0f; }
    .filter { display: flex; align-items: center; height: 24px; background: #1a1a1b; padding: 0 7px 1px 3px; flex: none; }
    .filter select { flex: 1; color: #b4b4b4; }
    .center { flex: 1; min-width: 0; display: flex; flex-direction: column; margin-left: 2px; }
    .tabs { display: flex; height: 26px; padding-top: 2px; align-items: stretch; font-size: 11px; }
    .tabs button { background: #242526; border-right: 1px solid #121212; padding: 0 7px; width: 71px; }
    .tabs .on { background: #3a3a3b; font-weight: 700; text-align: left; display: flex; align-items: center; gap: 10px; }
    .tabs .spacer { flex: 1; }
    .tabs .pull { background: none; border: 0; width: 20px; padding: 0 5px; }
    .view { position: relative; flex: 1; min-height: 0; background: #000000; border: 1px solid #3a3b3b; border-width: 1px 2px 0 2px; overflow: hidden; }
    .crumb { position: absolute; left: 2px; top: 2px; height: 27px; width: 150px; padding-left: 12px; background: #2b2b2d; color: #e6e6e6; font: 12px/25px "Liberation Sans", sans-serif; border: 1px solid #38383a; }
    .ucs { position: absolute; left: 24px; bottom: 18px; }
    .ucs text { fill: #ffffff; font: 300 20px Lato, sans-serif; text-anchor: middle; }
    .coord { position: absolute; right: 34px; bottom: 2px; height: 27px; padding: 0 10px; font-size: 13px; line-height: 25px; background: #232425; border: 1px solid #333435; border-radius: 4px; color: #d6d6d6; }
    .grid4 { position: absolute; right: 0; bottom: 0; width: 32px; height: 31px; display: grid; place-items: center; background: #232425; }
    .sheets { display: flex; align-items: center; height: 23px; background: #1b1c1e; border: solid #3a3b3b; border-width: 0 2px 1px 2px; padding: 0 0 1px 1px; flex: none; }
    .sheets .nav { width: 16px; height: 16px; margin-right: 3px; background: #323338; display: grid; place-items: center; color: #dcdcdc; }
    .sheets .tab { height: 18px; font: 700 13px/16px "Liberation Sans", sans-serif; width: 68px; padding-right: 14px; background: #3f4042; clip-path: polygon(0 0, 100% 0, 76% 100%, 0 100%); }
    .sheets .lay { font: 12px/16px "Noto Sans CJK KR", sans-serif; width: 54px; padding-right: 10px; background: #26272a; color: #8b8b8b; margin-left: -10px; clip-path: polygon(18% 0, 100% 0, 78% 100%, 2% 100%); }
    .stub { width: 17px; height: 16px; background: #35363b; border-left: 1px solid #d0d0d0; margin-left: 2px; }
    .cmd { display: grid; grid-template-columns: 24px 1fr; grid-template-rows: 85px 1fr; height: 112px; border-top: 1px solid #0b0b0b; background: #151618; font-family: "Liberation Sans", sans-serif; font-size: 13px; color: #c6c6c6; flex: none; }
    .strip { grid-row: span 2; background: #2b2c31; display: flex; flex-direction: column; align-items: center; gap: 11px; padding-top: 4px; }
    .strip i { width: 15px; height: 4px; background: repeating-conic-gradient(#8a8a8a 0 25%, transparent 0 50%) 0 0 / 2px 2px; }
    .log { overflow: hidden; display: grid; grid-template-rows: repeat(6, 1fr); align-content: end; padding: 0 0 1px 2px; border-bottom: 1px solid #34363a; }
    .log { grid-template-rows: none; grid-auto-rows: 16px; }
    .log p { margin: 0; line-height: 16px; }
    .prompt { display: flex; align-items: center; gap: 7px; padding: 0 0 1px 8px; }
    .prompt input { width: 100%; flex: 1; height: 20px; outline: 0; }
    .prompt .go { width: 18px; height: 18px; border-radius: 2px; background: #c9c9c9; color: #303030; display: grid; place-items: center; }
    .right-side { width: 313px; flex: none; margin-left: 2px; display: flex; flex-direction: column; background: #111212; }
    .cad { position: relative; flex: 483 1 0; display: flex; flex-direction: column; }
    .cad dock-panel { flex: 1; }
    .cad::after { content: ""; position: absolute; inset: -5px 0 -3px -4px; border: 4px solid #ffff00; pointer-events: none; z-index: 2; }
    .note { align-self: center; width: 218px; margin: 5px 4px 0 0; padding: 5px 30px; border-radius: 13px; background: #70ad47; color: #ffffff; font: 400 29px/37px Inter, sans-serif; text-align: center; white-space: normal; height: 83px; }
    .props { flex: 502 1 0; }
  `];

  private dn = html`<span class="dn"><svg width="11" height="7" viewBox="0 0 11 7"><path d="M0 0h11L5.500 7z" fill="#e0e0e0"/></svg></span>`;
  private more = html`<button class="more" aria-label="More"><svg class="ic" width="7" height="9" viewBox="0 0 7 9"><path d="M0 1h7M0 3.500h7" /><path class="f" d="M0 5h7L3.500 9z"/></svg></button>`;
  private combo(cls: string, label: string, value: string, lead: unknown = nothing) {
    return html`<label class="combo ${cls}">${lead}<select aria-label=${label}><option>${value}</option></select>${this.dn}</label>`;
  }
  private tool(name: string, cls = "") {
    return html`<button class="tb ${cls}" aria-label=${name}>${icon(ICONS, name, 20)}</button>`;
  }

  render() {
    const sep = html`<span class="sep"></span>`;
    const layerState = html`<svg class="ic" width="82" height="18" viewBox="0 0 82 18">
      <g class="w"><path class="f" d="M5 2a4 4 0 0 1 4 4c0 2-2 3-2 5v4H3.500v-4C3.500 9 1 8 1 6a4 4 0 0 1 4-4z"/>
      <circle class="f" cx="22" cy="9" r="3.500"/><path stroke-width="1.300" d="M22 1.500v3M22 13.500v3M14.500 9h3M26.500 9h3M16.500 3.500l2 2M25.500 12.500l2 2M27.500 3.500l-2 2M18.500 12.500l-2 2"/></g>
      <path stroke="#b0b0b0" d="M34 6l10 5M44 6l-10 5M39 3v11M35 3h11v13H36M36 13h6M46 7h-3"/><circle cx="39" cy="8.500" r="3" stroke="#b0b0b0"/>
      <path class="fw" d="M49 9h9v7h-9z"/><path stroke="#d8d8d8" stroke-width="1.500" d="M56 9V5.500a3 3 0 0 1 6 0V9"/>
      <path class="fw" d="M69 3h11v12H69z"/></svg>`;
    return html`
      <header class="top">
        <svg class="logo" viewBox="0 0 29 29" role="img" aria-label="CAD ID"><rect width="29" height="29" rx="2" fill="#0c3fb4"/><path d="M0 21h29v6q0 2-2 2H2q-2 0-2-2z" fill="#10bfc9"/><path d="M0 21h5l-3 3H0z" fill="#06307e"/><text x="14.500" y="14" font-size="10">CAD</text><text x="14.500" y="27" font-size="6">ID</text></svg>
        <div class="rows">
          <div class="titlebar">
            <div class="quick">${QUICK.map(([label, art]) => html`<button aria-label=${label}><svg class="ic" width="15" height="14" viewBox="0 0 16 14">${art}</svg></button>`)}
              <button class="more" aria-label="Customize"><svg class="ic" width="6" height="8" viewBox="0 0 7 9"><path d="M0 1h7M0 3.500h7"/><path class="f" d="M0 5h7L3.500 9z"/></svg></button></div>
            <h1><span>[CONNECTED] MIDAS CAD INFRA-DESIGN</span> - midas CIM_Drawing.cimz</h1>
            <div class="wbtn">
              <button aria-label="Minimize"><svg class="ic" width="12" height="12" viewBox="0 0 12 12"><path class="f" d="M1 6h10v3H1z"/></svg></button>
              <button aria-label="Restore"><svg class="ic" width="14" height="12" viewBox="0 0 14 12"><path stroke-width="1.500" d="M1 4.500h8v7H1zM4 4V1h9v6.500H9"/></svg></button>
              <button aria-label="Close"><svg class="ic" width="11" height="11" viewBox="0 0 11 11"><path stroke-width="2.200" d="M1 1l9 9M10 1l-9 9"/></svg></button>
            </div>
          </div>
          <nav class="menubar">${MENUS.map((m) => m === "Draw"
            ? html`<div class="dd"><button class="m" aria-expanded="true">${m}</button><draw-menu role="menu"></draw-menu></div>`
            : html`<button class="m">${m}</button>`)}</nav>
        </div>
      </header>

      <div class="bar bar1">
        <span class="grip"></span>${this.tool("layers")}${sep}
        ${this.combo("c249", "Layer", "0", layerState)}${sep}
        ${this.combo("c168", "Color", "ByLayer", html`<span class="white"></span>`)}${sep}
        ${this.combo("c180 grey right", "Linetype", "CONTINU...")}${sep}
        ${this.combo("c166 grey", "Lineweight", "ByLayer", html`<span class="rule"></span>`)}${sep}
        <span class="grip"></span>${this.tool("textStyle", "w27")}
        ${this.combo("c103", "Text style", "돋움")}${sep}
        ${this.combo("c73 grey", "Text height", "125,0")}${sep}
        ${this.tool("dimStyle", "w24")}${this.combo("c105 grey", "Dimension style", "SICHUL")}${sep}
        ${this.tool("leadStyle", "w24")}${this.combo("c104 grey", "Leader style", "Standard")}
      </div>
      <div class="bar">${BAR2.map((g) => html`<div class="group"><span class="grip"></span>${g.map((n) => this.tool(n))}${this.more}</div>`)}</div>
      <div class="bar"><span class="grip"></span>${BAR3.map((n) => this.tool(n))}</div>

      <div class="work">
        <aside class="side">
          <dock-panel heading="CIM View">
            <label class="filter"><select aria-label="Filter"><option>All</option></select><svg width="9" height="5" viewBox="0 0 9 5"><path d="M0 0h9L4.500 5z" fill="#d8d8d8"/></svg></label>
            <item-tree status .nodes=${TREE_CIM}></item-tree>
          </dock-panel>
          <dock-panel heading="Draw Lib."><item-tree status wide .nodes=${TREE_LIB}></item-tree></dock-panel>
        </aside>

        <main class="center">
          <div class="tabs">
            <button>cDrawing1</button><button class="on">Sheet <svg class="ic" width="7" height="7" viewBox="0 0 7 7"><path d="M0 0l7 7M7 0L0 7"/></svg></button>
            <span class="spacer"></span>
            <button class="pull" aria-label="Tab list"><svg width="10" height="6" viewBox="0 0 10 6"><path d="M0 0h10L5 6z" fill="#ffffff"/></svg></button>
          </div>
          <div class="view">
            <div class="crumb">CAD Mode &gt; Sheet</div>
            <svg class="ucs" width="140" height="150" viewBox="0 -6 140 150" fill="none" stroke="#ffffff">
              <path d="M2.500 119.500h16v16h-16zM10.500 127.500V58M10.500 127.500H81M2.500 57.500L10.500 35l8 22.500zM80.500 119.500l23 8-23 8z"/>
              <text x="10.500" y="18" stroke="none">Y</text><text x="126.500" y="134" stroke="none">X</text>
            </svg>
            <div class="coord">279077.275,96297.622,0.000</div>
            <button class="grid4" aria-label="Grid"><svg width="19" height="19" viewBox="0 0 19 19" fill="#f2f2f2"><rect width="8" height="8" rx="1"/><rect x="11" width="8" height="8" rx="1"/><rect y="11" width="8" height="8" rx="1"/><rect x="11" y="11" width="8" height="8" rx="1"/></svg></button>
          </div>
          <div class="sheets">
            <button class="nav" aria-label="First"><svg class="ic" width="10" height="10" viewBox="0 0 10 10"><path class="f" d="M0 0h2v10H0zM9 0v10L3 5z"/></svg></button>
            <button class="nav" aria-label="Previous"><svg class="ic" width="10" height="10" viewBox="0 0 10 10"><path class="f" d="M8 0v10L2 5z"/></svg></button>
            <button class="nav" aria-label="Next"><svg class="ic" width="10" height="10" viewBox="0 0 10 10"><path class="f" d="M2 0v10l6-5z"/></svg></button>
            <button class="nav" aria-label="Last"><svg class="ic" width="10" height="10" viewBox="0 0 10 10"><path class="f" d="M8 0h2v10H8zM1 0v10l6-5z"/></svg></button>
            <button class="tab">Model</button><button class="tab lay">배치1</button><span class="stub"></span>
          </div>
          <section class="cmd">
            <div class="strip"><i></i><svg width="11" height="11" viewBox="0 0 11 11"><path d="M0 1h11M0 5.500h11M0 10h11" stroke="#f0f0f0" stroke-width="1.600"/></svg></div>
            <div class="log"><p>Command:</p><p>Command:</p><p>Command:</p><p>Command:&nbsp; *Cancel*</p><p>Command:</p><p>Specify opposite corner:</p></div>
            <label class="prompt"><span class="go"><svg class="ic" width="12" height="10" viewBox="0 0 12 10"><path stroke-width="1.500" d="M1 1l4 4-4 4M6 9h5"/></svg></span>Command:<input type="text" aria-label="Command"></label>
          </section>
        </main>

        <aside class="right-side">
          <div class="cad"><dock-panel heading="CAD View">
            <item-tree .nodes=${TREE_CAD}></item-tree>
            <div class="note">CAD View Mode</div>
          </dock-panel></div>
          <dock-panel class="props" heading="Properties"><property-grid></property-grid></dock-panel>
        </aside>
      </div>`;
  }
}
